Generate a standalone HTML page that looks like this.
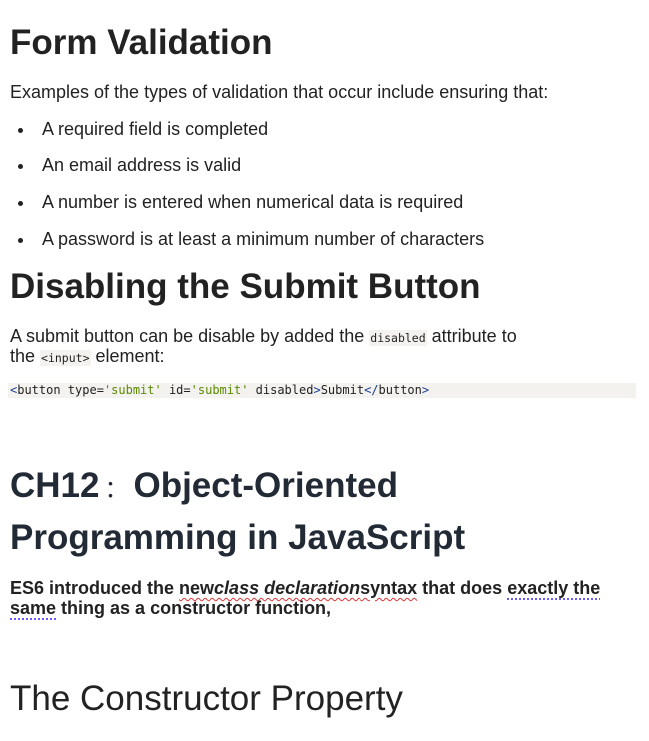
<!DOCTYPE html>
<html><head><meta charset="utf-8"><style>
body{margin:0;width:649px;height:741px;background:#fff;font-family:"Liberation Sans",Arial,sans-serif;color:#222;position:relative;overflow:hidden}
.a{position:absolute;left:10px;white-space:nowrap;margin:0}
h1,h2{font-weight:bold;font-size:35px;line-height:40px}
p{font-size:18px;line-height:20px}
code,.code{font-family:"DejaVu Sans Mono","Liberation Mono",monospace;font-size:12px}
.ic{background:#f4f2ef;padding:1px 1px;font-size:11.5px}
.li{position:absolute;left:42px;font-size:18px;line-height:20px}
.dot{position:absolute;left:18px;width:5px;height:5px;border-radius:50%;background:#222}
.red{text-decoration:underline wavy #d33;text-decoration-thickness:1px;text-underline-offset:3px}
.blu{text-decoration:underline dotted #6a5cf0;text-decoration-thickness:2px;text-underline-offset:4px}
</style></head><body>
<h1 class="a" style="top:23px">Form Validation</h1>
<p class="a" style="top:82px">Examples of the types of validation that occur include ensuring that:</p>
<div class="dot" style="top:128px"></div><div class="li" style="top:119px">A required field is completed</div>
<div class="dot" style="top:164px"></div><div class="li" style="top:155px">An email address is valid</div>
<div class="dot" style="top:201px"></div><div class="li" style="top:192px">A number is entered when numerical data is required</div>
<div class="dot" style="top:238px"></div><div class="li" style="top:229px">A password is at least a minimum number of characters</div>
<h2 class="a" style="top:267px">Disabling the Submit Button</h2>
<p class="a" style="top:326px">A submit button can be disable by added the <code class="ic">disabled</code> attribute to</p>
<p class="a" style="top:346px">the <code class="ic">&lt;input&gt;</code> element:</p>
<div style="position:absolute;left:8px;top:383px;width:628px;height:15px;background:#f4f2ef"></div>
<div class="a code" style="top:383px;left:10px;line-height:15px"><span style="color:#1a3c8c">&lt;</span>button type=<span style="color:#5a8a00">'submit'</span> id=<span style="color:#5a8a00">'submit'</span> disabled<span style="color:#1a3c8c">&gt;</span>Submit<span style="color:#1a3c8c">&lt;/</span>button<span style="color:#1a3c8c">&gt;</span></div>
<h2 class="a" style="top:466px;color:#222a35">CH12<span style="font-weight:normal;font-size:24px;display:inline-block;width:34px;text-align:center">：</span>Object-Oriented</h2>
<h2 class="a" style="top:518px;color:#222a35">Programming in JavaScript</h2>
<p class="a" style="top:578px;font-weight:bold;font-size:18px">ES6 introduced the <span class="red">new<i>class declaration</i>syntax</span> that does <span class="blu">exactly the </span></p>
<p class="a" style="top:598px;font-weight:bold;font-size:18px"><span class="blu">same</span> thing as a constructor function,</p>
<div class="a" style="top:679px;font-size:35px;line-height:40px">The Constructor Property</div>
</body></html>
